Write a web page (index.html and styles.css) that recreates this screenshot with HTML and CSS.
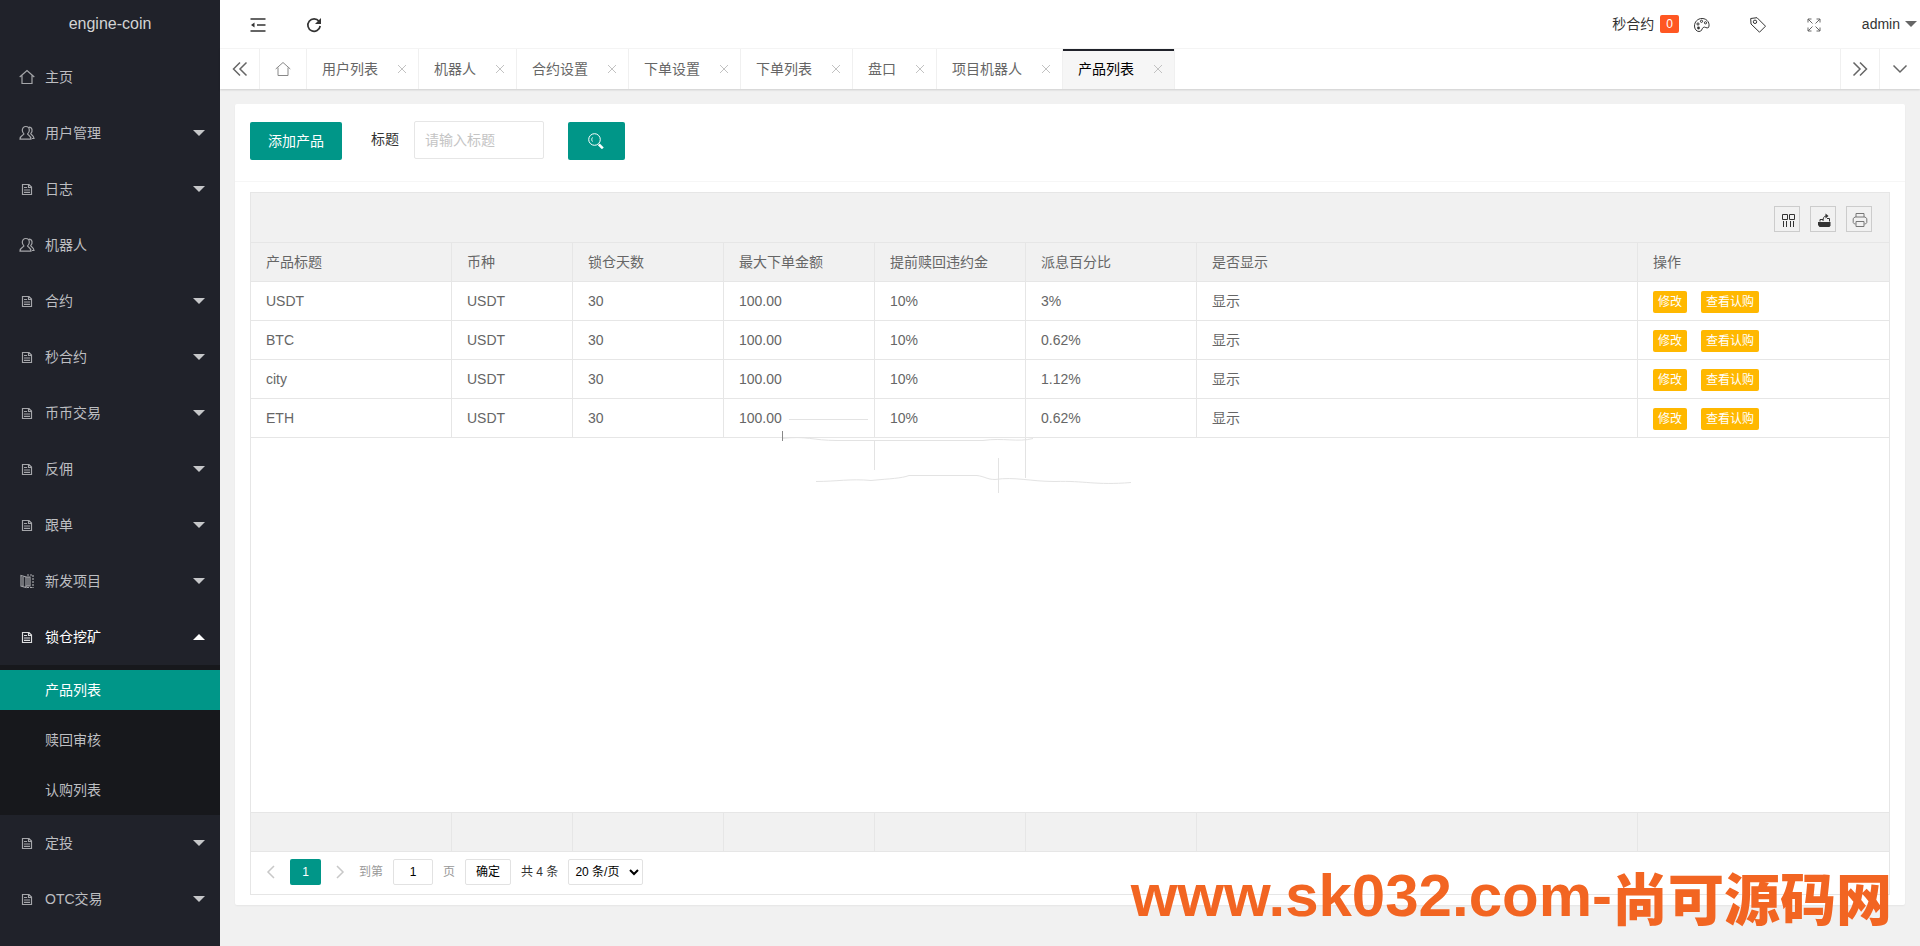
FILE: index.html
```html
<!DOCTYPE html>
<html lang="zh-CN">
<head>
<meta charset="utf-8">
<title>engine-coin</title>
<link rel="stylesheet" href="styles.css">
</head>
<body>
<svg class="sprite" aria-hidden="true">
  <symbol id="i-home" viewBox="0 0 16 16"><path d="M.7 8 8 1.500 15.300 8M3 6.500v8h10v-8"/></symbol>
  <symbol id="i-user" viewBox="0 0 16 16"><path d="M6.800 1.500c2.200 0 3.500 1.600 3.500 3.800 0 1.600-.8 2.800-1.700 3.600 0 1.300 3.200 1.300 3.400 5.300H1c.2-4 3.900-4 3.900-5.300C4 8.100 3.300 6.900 3.300 5.300c0-2.200 1.300-3.800 3.500-3.800zM10 2.200c3.600 0 3.900 4.300 1.700 6.400 0 1.200 3 1.500 3.300 4.900h-2"/></symbol>
  <symbol id="i-file" viewBox="0 0 16 16"><path d="M3.500 3.500h6.500l2.500 2.500v7.500h-9zM9.500 3.500v3h3M5 6.500h3M5 9h6M5 11.300h6"/></symbol>
  <symbol id="i-book" viewBox="0 0 16 16"><path d="M2 2.500l5 1.500v10.500L2 13zM2 2.500v11M4 4v9M7 4h4v9H7M9 4v9"/><path d="M14 2v13M8 2h6M8 14.500h6" stroke-dasharray="2 1"/></symbol>
  <symbol id="i-left2" viewBox="0 0 16 16"><path d="M8 1.500 1.500 8 8 14.500M14.500 1.500 8 8l6.500 6.500"/></symbol>
  <symbol id="i-right2" viewBox="0 0 16 16"><path d="M1.500 1.500 8 8l-6.500 6.500M8 1.500 14.500 8 8 14.500"/></symbol>
  <symbol id="i-down" viewBox="0 0 16 16"><path d="M1.500 4.500 8 11l6.500-6.500"/></symbol>
  <symbol id="i-left" viewBox="0 0 16 16"><path d="M11 2 5 8l6 6"/></symbol>
  <symbol id="i-right" viewBox="0 0 16 16"><path d="M5 2l6 6-6 6"/></symbol>
  <symbol id="i-close" viewBox="0 0 10 10"><path d="M1 1l8 8M9 1 1 9"/></symbol>
</svg>

<aside class="side">
  <div class="logo">engine-coin</div>
  <nav>
    <a class="item" href="#"><svg class="ico"><use href="#i-home"/></svg>主页</a>
    <a class="item sub" href="#"><svg class="ico"><use href="#i-user"/></svg>用户管理</a>
    <a class="item sub" href="#"><svg class="ico"><use href="#i-file"/></svg>日志</a>
    <a class="item" href="#"><svg class="ico"><use href="#i-user"/></svg>机器人</a>
    <a class="item sub" href="#"><svg class="ico"><use href="#i-file"/></svg>合约</a>
    <a class="item sub" href="#"><svg class="ico"><use href="#i-file"/></svg>秒合约</a>
    <a class="item sub" href="#"><svg class="ico"><use href="#i-file"/></svg>币币交易</a>
    <a class="item sub" href="#"><svg class="ico"><use href="#i-file"/></svg>反佣</a>
    <a class="item sub" href="#"><svg class="ico"><use href="#i-file"/></svg>跟单</a>
    <a class="item sub" href="#"><svg class="ico"><use href="#i-book"/></svg>新发项目</a>
    <a class="item sub open" href="#"><svg class="ico"><use href="#i-file"/></svg>锁仓挖矿</a>
    <div class="children">
      <a class="current" href="#">产品列表</a>
      <a href="#">赎回审核</a>
      <a href="#">认购列表</a>
    </div>
    <a class="item sub" href="#"><svg class="ico"><use href="#i-file"/></svg>定投</a>
    <a class="item sub" href="#"><svg class="ico"><use href="#i-file"/></svg>OTC交易</a>
  </nav>
</aside>

<div class="page">
  <header class="top">
    <button class="tool" aria-label="收起菜单"><svg class="ico" viewBox="0 0 16 16"><path stroke-width="1.500" d="M.5 2h15M7 8h8.500M.5 14h15"/><path class="solid" d="M1 8l3.500-2.500v5z"/></svg></button>
    <button class="tool" aria-label="刷新"><svg class="ico" viewBox="0 0 16 16"><path stroke-width="1.700" d="M13 4.300A6.200 6.200 0 1 0 14.200 9"/><path class="solid" d="M15 1v6H9z"/></svg></button>
    <div class="top-right">
      <a class="notice" href="#">秒合约<span class="badge">0</span></a>
      <button class="tool narrow" aria-label="主题"><svg class="ico" viewBox="0 0 16 16"><path d="M14.500 10.500c1.800-3.500-.8-9-6.500-9C3.500 1.500.5 5 .5 9c0 3 2 5.500 4.500 5.500 3 0 2.500-2.500 4.200-4 1.600-1.400 3.600 1.500 5.300 0z"/><circle cx="4" cy="7" r="1.100"/><circle cx="7.500" cy="4.300" r="1.100"/><circle cx="11.500" cy="5.800" r="1.100"/><circle class="solid" cx="4.500" cy="11" r="1.400"/></svg></button>
      <button class="tool" aria-label="便签"><svg class="ico" viewBox="0 0 16 16"><path d="M.7 1.500 7 .7l8.500 8.500-6 6L1 7z"/><circle cx="5" cy="4.800" r="1.700"/></svg></button>
      <button class="tool light" aria-label="全屏"><svg class="ico" viewBox="0 0 16 16"><path d="M2 5.500V2h3.500M2 2l4.500 4.500M10.500 2H14v3.500M14 2 9.500 6.500M2 10.500V14h3.500M2 14l4.500-4.500M14 10.500V14h-3.500M14 14 9.500 9.500"/></svg></button>
      <a class="account" href="#">admin</a>
    </div>
  </header>

  <div class="tabs">
    <button class="ctl" aria-label="向左"><svg class="ico"><use href="#i-left2"/></svg></button>
    <a class="tab-home" href="#" aria-label="主页"><svg class="ico"><use href="#i-home"/></svg></a>
    <a class="tab" href="#">用户列表<svg class="x"><use href="#i-close"/></svg></a>
    <a class="tab" href="#">机器人<svg class="x"><use href="#i-close"/></svg></a>
    <a class="tab" href="#">合约设置<svg class="x"><use href="#i-close"/></svg></a>
    <a class="tab" href="#">下单设置<svg class="x"><use href="#i-close"/></svg></a>
    <a class="tab" href="#">下单列表<svg class="x"><use href="#i-close"/></svg></a>
    <a class="tab" href="#">盘口<svg class="x"><use href="#i-close"/></svg></a>
    <a class="tab" href="#">项目机器人<svg class="x"><use href="#i-close"/></svg></a>
    <a class="tab active" href="#">产品列表<svg class="x"><use href="#i-close"/></svg></a>
    <button class="ctl end" aria-label="向右"><svg class="ico"><use href="#i-right2"/></svg></button>
    <button class="ctl" aria-label="更多"><svg class="ico"><use href="#i-down"/></svg></button>
  </div>

  <main>
    <section class="card">
      <form class="search">
        <button class="btn" type="button">添加产品</button>
        <label for="title">标题</label>
        <input id="title" type="text" placeholder="请输入标题">
        <button class="btn find" type="button" aria-label="搜索"><svg class="ico" viewBox="0 0 16 16"><circle cx="6.500" cy="6.500" r="5.800"/><path d="M4.500 4.500c-1 1.200-1 2.800 0 4"/><path stroke-width="2.600" d="M10.800 11.300l4 4"/></svg></button>
      </form>
      <div class="grid">
        <div class="grid-tools">
          <button aria-label="筛选列"><svg class="ico" viewBox="0 0 16 16"><path d="M2.500 2.500h5v5h-5zM9.500 2.500h5v5h-5zM3.500 9v6M6.500 9v6M10.500 9v6M13.500 9v6"/></svg></button>
          <button aria-label="导出"><svg class="ico" viewBox="0 0 16 16"><path class="solid" d="M2 10h12.500v3.500l-1 1.500h-10L2 13z"/><path d="M4 9.500V7.500h3M11 6.500h2.500v3M7 9c0-3 1-5 3-5"/><path class="solid" d="M9.500 1.500 12.500 4l-3 2.500z"/></svg></button>
          <button class="print" aria-label="打印"><svg class="ico" viewBox="0 0 16 16"><path d="M4 5V1.500h8V5M3.500 12H2.500L1.200 10.500v-4L3 5h10l1.800 1.500v4L13.500 12h-1M4 9.500h8v5H4z"/></svg></button>
        </div>
        <table>
          <colgroup><col class="c1"><col class="c2"><col class="c3"><col class="c3"><col class="c3"><col class="c6"><col><col class="c8"></colgroup>
          <thead>
            <tr><th>产品标题</th><th>币种</th><th>锁仓天数</th><th>最大下单金额</th><th>提前赎回违约金</th><th>派息百分比</th><th>是否显示</th><th>操作</th></tr>
          </thead>
          <tbody>
            <tr><td>USDT</td><td>USDT</td><td>30</td><td>100.00</td><td>10%</td><td>3%</td><td>显示</td><td><div class="ops"><button>修改</button><button>查看认购</button></div></td></tr>
            <tr><td>BTC</td><td>USDT</td><td>30</td><td>100.00</td><td>10%</td><td>0.62%</td><td>显示</td><td><div class="ops"><button>修改</button><button>查看认购</button></div></td></tr>
            <tr><td>city</td><td>USDT</td><td>30</td><td>100.00</td><td>10%</td><td>1.12%</td><td>显示</td><td><div class="ops"><button>修改</button><button>查看认购</button></div></td></tr>
            <tr><td>ETH</td><td>USDT</td><td>30</td><td>100.00</td><td>10%</td><td>0.62%</td><td>显示</td><td><div class="ops"><button>修改</button><button>查看认购</button></div></td></tr>
          </tbody>
        </table>
        <div class="blank">
          <svg class="traces" viewBox="0 0 350 90" aria-hidden="true">
            <path d="M7 1.500h79M0 20.500c25-3 30 2 55 2h146c20-3 35 2 50-2M92.500 22v30M243.500 20v40M34 63.500c20 0 35-3 55-1 20-2 30-2 38-5h68c8 1 10 4 18 4 20-3 35 2 60 2 30-1 40 4 76 1M216.500 40v35"/>
            <path class="dark" d="M.5 13v10"/>
          </svg>
        </div>
        <table class="totals" aria-label="合计">
          <colgroup><col class="c1"><col class="c2"><col class="c3"><col class="c3"><col class="c3"><col class="c6"><col><col class="c8"></colgroup>
          <tbody><tr><td></td><td></td><td></td><td></td><td></td><td></td><td></td><td></td></tr></tbody>
        </table>
        <div class="pager">
          <button class="arrow" aria-label="上一页"><svg class="ico"><use href="#i-left"/></svg></button>
          <span class="num">1</span>
          <button class="arrow" aria-label="下一页"><svg class="ico"><use href="#i-right"/></svg></button>
          <label for="pg">到第</label>
          <input id="pg" type="text" value="1">
          <span class="unit">页</span>
          <button class="go">确定</button>
          <span class="count">共 4 条</span>
          <select aria-label="每页条数"><option>20 条/页</option></select>
        </div>
      </div>
    </section>
  </main>
</div>
<div class="watermark">www.sk032.com-<span>尚可源码网</span></div>
</body>
</html>
```
FILE: styles.css
```css
* { box-sizing: border-box; }
body {
  margin: 0;
  display: flex;
  height: 100vh;
  overflow: hidden;
  background: #f1f1f1;
  color: #333;
  font: 14px/24px "Liberation Sans", "Noto Sans CJK SC", sans-serif;
}
a { color: inherit; text-decoration: none; }
button, input, select { font: inherit; color: inherit; margin: 0; }
button { padding: 0; border: 0; background: none; }
.sprite { position: absolute; width: 0; height: 0; }
.ico, .x { flex: none; width: 16px; height: 16px; fill: none; stroke: currentColor; stroke-width: 1; }
.solid { fill: currentColor; stroke: none; }

.side { flex: none; width: 220px; background: #20222a; color: #bdbec1; }
.logo { height: 49px; line-height: 47px; text-align: center; font-size: 16px; color: #d2d3d4; }
.item { display: flex; align-items: center; gap: 10px; height: 56px; padding: 0 15px 0 19px; }
.item .ico { stroke-width: 1.2; opacity: .85; }
.sub::after {
  content: "";
  margin-left: auto;
  border: 6px solid transparent;
  border-top-color: #c6c7c9;
  border-bottom: 0;
}
.open { color: #fff; }
.open::after { border-top: 0; border-bottom: 6px solid #fff; }
.children { background: #17181c; display: flow-root; }
.children a { display: block; height: 40px; margin: 5px 0 10px; padding-left: 45px; line-height: 40px; }
.children a:last-child { margin-bottom: 5px; }
.children .current { background: #009688; color: #fff; }

.page { flex: 1; min-width: 0; display: flex; flex-direction: column; }
.top { display: flex; height: 49px; padding-left: 10px; background: #fff; border-bottom: 1px solid #f6f6f6; }
.tool { display: flex; align-items: center; justify-content: center; width: 56px; padding: 2px 0 0; }
.light { color: #666; }
.top-right { display: flex; margin-left: auto; align-items: stretch; }
.notice { display: flex; align-items: center; }
.badge { margin-left: 6px; padding: 0 6px; height: 18px; border-radius: 2px; background: #ff5722; color: #fff; font-size: 12px; line-height: 18px; }
.tool.narrow { width: 51px; padding-right: 5px; }
.account { display: flex; align-items: center; gap: 5px; margin-left: 20px; padding-right: 3px; }
.account::after { content: ""; border: 6px solid transparent; border-top-color: #666; border-bottom: 0; }

.tabs { display: flex; height: 40px; background: #fff; color: #666; box-shadow: 0 1px 2px rgba(0, 0, 0, .15); z-index: 1; }
.ctl { display: flex; align-items: center; justify-content: center; width: 40px; border-right: 1px solid #f0f0f0; }
.ctl .ico { stroke-width: 1.5; }
.ctl.end { margin-left: auto; border-left: 1px solid #f0f0f0; }
.ctl:last-child { border: 0; }
.tab-home { display: flex; align-items: center; justify-content: center; width: 47px; border-right: 1px solid #f0f0f0; color: #888; }
.tab { display: flex; align-items: center; padding: 0 11px 0 15px; border-right: 1px solid #f0f0f0; white-space: nowrap; }
.tab .x { width: 10px; height: 10px; margin-left: 19px; color: #c2c2c2; }
.active { background: #f6f6f6; color: #000; box-shadow: inset 0 2px #20222a; }

main { flex: 1; min-height: 0; display: flex; padding: 15px 15px 41px; }
.card { flex: 1; min-width: 0; display: flex; flex-direction: column; background: #fff; border-radius: 2px; box-shadow: 0 1px 2px rgba(0, 0, 0, .05); }
.search { display: flex; align-items: flex-start; padding: 17px 15px 21px; border-bottom: 1px solid #f6f6f6; }
.btn { height: 38px; margin-top: 1px; padding: 0 18px; border-radius: 2px; background: #009688; color: #fff; }
.find { display: flex; align-items: center; justify-content: center; width: 57px; padding: 0 2px 0 0; margin-left: 24px; }
.search label { padding: 8px 15px 0 29px; line-height: 20px; }
.search input { width: 130px; height: 38px; padding: 0 10px; border: 1px solid #e6e6e6; border-radius: 2px; background: #fff; }
.search input::placeholder { color: #c4c4c4; opacity: 1; }

.grid { flex: 1; display: flex; flex-direction: column; margin: 10px 15px; border: 1px solid #e6e6e6; }
.grid-tools { display: flex; justify-content: flex-end; gap: 10px; height: 50px; padding: 13px 17px 0; background: #f1f1f1; border-bottom: 1px solid #e6e6e6; }
.grid-tools button { display: flex; align-items: center; justify-content: center; width: 26px; height: 26px; padding: 1px 0 0 1px; border: 1px solid #ccc; }
.grid-tools .print { color: #777; }
table { width: 100%; table-layout: fixed; border-collapse: separate; border-spacing: 0; color: #666; }
.c1 { width: 201px; }
.c2 { width: 121px; }
.c3 { width: 151px; }
.c6 { width: 171px; }
.c8 { width: 251px; }
th, td { height: 39px; padding: 0 15px; border: solid #e6e6e6; border-width: 0 1px 1px 0; text-align: left; font-weight: 400; line-height: 24px; }
th:last-child, td:last-child { border-right: 0; }
th, .totals td { background: #f1f1f1; }
.totals td { height: 40px; border-top-width: 1px; }
.ops { display: flex; gap: 14px; padding-top: 1px; }
.ops button { height: 22px; padding: 0 5px; border-radius: 2px; background: #ffb800; color: #fff; font-size: 12px; line-height: 22px; }
.blank { flex: 1; position: relative; }
.traces { position: absolute; left: 531px; top: -20px; width: 350px; height: 90px; fill: none; stroke: #e3e3e3; }
.traces .dark { stroke: #888; }
.pager { display: flex; align-items: center; height: 42px; padding: 0 6px 2px; font-size: 12px; color: #999; }
.arrow { display: flex; justify-content: center; width: 28px; color: #c8c8c8; }
.arrow .ico { stroke-width: 1.5; }
.num { width: 31px; height: 26px; margin: 0 5px; border-radius: 2px; background: #009688; color: #fff; text-align: center; line-height: 26px; }
.pager label { margin: 0 10px 0 5px; }
.pager input { width: 40px; height: 26px; padding: 0; border: 1px solid #e2e2e2; border-radius: 2px; text-align: center; color: #000; }
.unit { margin: 0 10px; }
.go { width: 46px; height: 26px; border: 1px solid #e2e2e2; border-radius: 2px; color: #000; }
.count { margin: 0 10px; color: #333; }
.pager select { width: 75px; height: 26px; padding: 0 2px; border: 1px solid #e2e2e2; border-radius: 2px; background: #fff; color: #000; }

.watermark {
  position: absolute;
  right: 28px;
  bottom: 8px;
  display: flex;
  align-items: center;
  color: #f26522;
  font: 700 60px/84px "Liberation Sans", sans-serif;
  white-space: nowrap;
}
.watermark span { font: 900 56px/84px "Noto Sans CJK SC", sans-serif; }
```
